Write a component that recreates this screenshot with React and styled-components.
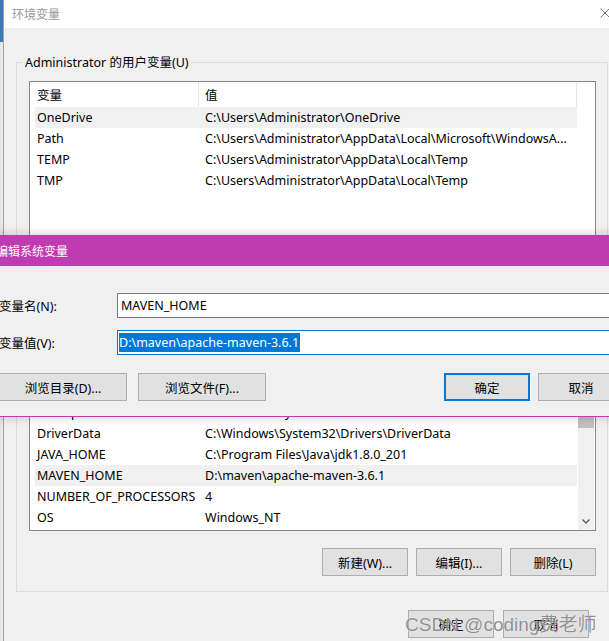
import styled, { createGlobalStyle } from "styled-components"

const GlobalStyle = createGlobalStyle`
    html, body {
        margin: 0;
        padding: 0;
        background: #f0f0f0;
    }
    body {
        font-family: "Noto Sans", "Noto Sans CJK SC", sans-serif;
        color: #000;
    }
`

const uiFont = `"Noto Sans", "Noto Sans CJK SC", sans-serif`

const Screen = styled.div`
    position: relative;
    width: 609px;
    height: 641px;
    overflow: hidden;
    display: flex;
    background: #f0f0f0;
`

// sliver of another window peeking out on the left
const BehindEdge = styled.div`
    flex: none;
    width: 3px;
    background: linear-gradient(to bottom, #3d78bd 0 42px, #e6e6e6 42px);
`

const Window = styled.div`
    flex: 1;
    min-width: 0;
    display: flex;
    flex-direction: column;
    border-left: 1px solid #a3a3a3;
`

const TitleBar = styled.div`
    flex: none;
    height: 28px;
    display: flex;
    align-items: center;
    justify-content: space-between;
    padding-left: 8px;
    background: #fff;
    color: #999;
    font-size: 12px;
`

const CloseIcon = styled.svg`
    margin-right: -1px;
    margin-top: -2px;
`

const WindowBody = styled.div`
    flex: 1;
    display: flex;
    flex-direction: column;
    padding: 26px 1px 0 12px;
`

const GroupBox = styled.fieldset`
    margin: 0;
    min-width: 0;
    padding: 10px 11px 15px 12px;
    border: 1px solid #dcdcdc;
    display: flex;
    flex-direction: column;
    gap: 17px;
`

const Legend = styled.legend`
    margin-left: -6px;
    padding: 0 2px;
    font-size: 12.5px;
    line-height: 17px;
`

const ListBox = styled.div`
    box-sizing: border-box;
    height: 450px;
    border: 1px solid #828790;
    background: #fff;
    padding-left: 5px;
    display: flex;
    flex-direction: column;
    font-size: 12.5px;
`

const Pane = styled.div`
    display: grid;
    grid-template-columns: 1fr 18px;
    height: ${p => p.$height || "auto"};
`

const Filler = styled.div`
    flex: 1;
`

const Rows = styled.div`
    display: flex;
    flex-direction: column;
    min-width: 0;
`

const Row = styled.div`
    display: grid;
    grid-template-columns: 164px 1fr;
    align-items: center;
    height: ${p => p.$header ? "25px" : "21px"};
    background: ${p => p.$selected ? "#f0f0f0" : "transparent"};
    white-space: nowrap;
`

const Cell = styled.div`
    box-sizing: border-box;
    height: 100%;
    display: flex;
    align-items: center;
    overflow: hidden;
    padding-left: ${p => p.$value ? "6px" : "2px"};
    border-right: ${p => p.$header ? "1px solid #e5e5e5" : "none"};
`

const ScrollTrack = styled.div`
    margin-left: 1px;
    width: 16px;
    background: #f0f0f0;
    display: flex;
    flex-direction: column;
    justify-content: space-between;
    align-items: stretch;
`

const Thumb = styled.div`
    height: 26px;
    background: #c1c1c1;
`

const ArrowBox = styled.div`
    height: 17px;
    display: flex;
    align-items: center;
    justify-content: center;
`

const ButtonRow = styled.div`
    display: flex;
    justify-content: ${p => p.$align || "flex-end"};
    gap: ${p => p.$gap || "8px"};
    padding-right: ${p => p.$padRight || "0"};
    margin-top: ${p => p.$top || "0"};
`

const Button = styled.button`
    box-sizing: border-box;
    width: ${p => p.$wide ? "128px" : "86px"};
    height: 28px;
    padding: 0;
    background: #e1e1e1;
    border: ${p => p.$default ? "2px solid #0078d7" : "1px solid #adadad"};
    font-family: ${uiFont};
    font-size: 12.5px;
    color: #000;
`

const Dialog = styled.div`
    position: absolute;
    top: 235px;
    left: -12px;
    width: 647px;
    box-sizing: border-box;
    background: #f0f0f0;
    border: 1px solid #c13bb0;
    border-top: none;
    box-shadow: 0 0 11px rgba(0, 0, 0, 0.2);
`

const DialogTitle = styled.div`
    height: 31px;
    display: flex;
    align-items: center;
    padding-left: 7px;
    background: #c13bb0;
    color: #fff;
    font-size: 12px;
`

const DialogBody = styled.div`
    padding: 27px 10px 15px 10px;
`

const Form = styled.div`
    display: grid;
    grid-template-columns: 118px 1fr;
    row-gap: 12px;
    align-items: center;
    font-size: 12.5px;
`

const TextField = styled.div`
    box-sizing: border-box;
    height: 25px;
    display: flex;
    align-items: center;
    background: #fff;
    border: 1px solid ${p => p.$focused ? "#0078d7" : "#7a7a7a"};
    padding-left: ${p => p.$focused ? "1px" : "3px"};
    white-space: nowrap;
`

const Selection = styled.span`
    background: #0078d7;
    color: #fff;
    line-height: 19px;
    padding-right: 1px;
`

const ButtonGroup = styled.div`
    display: flex;
    gap: ${p => p.$gap || "8px"};
`

const Watermark = styled.div`
    position: absolute;
    z-index: 2;
    left: 405px;
    top: 609px;
    font-family: "Liberation Sans", "Noto Sans CJK SC", sans-serif;
    font-size: 19px;
    color: rgba(125, 125, 125, 0.85);
    text-shadow: 0 0 1px rgba(255, 255, 255, 0.9);
    white-space: nowrap;
    pointer-events: none;
`

const userVars = [
    ["OneDrive", "C:\\Users\\Administrator\\OneDrive", true],
    ["Path", "C:\\Users\\Administrator\\AppData\\Local\\Microsoft\\WindowsA..."],
    ["TEMP", "C:\\Users\\Administrator\\AppData\\Local\\Temp"],
    ["TMP", "C:\\Users\\Administrator\\AppData\\Local\\Temp"],
]

const systemVars = [
    ["ComSpec", "C:\\Windows\\system32\\cmd.exe"],
    ["DriverData", "C:\\Windows\\System32\\Drivers\\DriverData"],
    ["JAVA_HOME", "C:\\Program Files\\Java\\jdk1.8.0_201"],
    ["MAVEN_HOME", "D:\\maven\\apache-maven-3.6.1", true],
    ["NUMBER_OF_PROCESSORS", "4"],
    ["OS", "Windows_NT"],
]

const VarRow = ({ name, value, selected }) => (
    <Row $selected={selected}>
        <Cell>{name}</Cell>
        <Cell $value>{value}</Cell>
    </Row>
)

const App = () => {
    return (
        <Screen>
            <GlobalStyle />
            <BehindEdge />
            <Window>
                <TitleBar>
                    <span>环境变量</span>
                    <CloseIcon width="10" height="10" viewBox="0 0 10 10">
                        <path d="M0.5 0.5 L9.5 9.5 M9.5 0.5 L0.5 9.5" stroke="#777" strokeWidth="1" fill="none" />
                    </CloseIcon>
                </TitleBar>
                <WindowBody>
                    <GroupBox>
                        <Legend>Administrator 的用户变量(U)</Legend>
                        <ListBox>
                            <Pane>
                                <Rows>
                                    <Row $header>
                                        <Cell $header>变量</Cell>
                                        <Cell $header $value>值</Cell>
                                    </Row>
                                    {userVars.map(([n, v, s]) => (
                                        <VarRow key={n} name={n} value={v} selected={s} />
                                    ))}
                                </Rows>
                                <div />
                            </Pane>
                            <Filler />
                            <Pane $height="128px">
                                <Rows>
                                    {systemVars.map(([n, v, s]) => (
                                        <VarRow key={n} name={n} value={v} selected={s} />
                                    ))}
                                </Rows>
                                <ScrollTrack>
                                    <Thumb />
                                    <ArrowBox>
                                        <svg width="8" height="5" viewBox="0 0 8 5">
                                            <path d="M0.5 0.5 L4 4 L7.5 0.5" stroke="#606060" strokeWidth="1.4" fill="none" />
                                        </svg>
                                    </ArrowBox>
                                </ScrollTrack>
                            </Pane>
                        </ListBox>
                        <ButtonRow>
                            <Button>新建(W)...</Button>
                            <Button>编辑(I)...</Button>
                            <Button>删除(L)</Button>
                        </ButtonRow>
                    </GroupBox>
                    <ButtonRow $top="18px" $gap="9px" $padRight="19px">
                        <Button>确定</Button>
                        <Button>取消</Button>
                    </ButtonRow>
                </WindowBody>
            </Window>

            <Dialog>
                <DialogTitle>编辑系统变量</DialogTitle>
                <DialogBody>
                    <Form>
                        <span>变量名(N):</span>
                        <TextField>MAVEN_HOME</TextField>
                        <span>变量值(V):</span>
                        <TextField $focused>
                            <Selection>D:\maven\apache-maven-3.6.1</Selection>
                        </TextField>
                    </Form>
                    <ButtonRow $align="space-between" $top="18px">
                        <ButtonGroup $gap="11px">
                            <Button $wide>浏览目录(D)...</Button>
                            <Button $wide>浏览文件(F)...</Button>
                        </ButtonGroup>
                        <ButtonGroup>
                            <Button $default>确定</Button>
                            <Button>取消</Button>
                        </ButtonGroup>
                    </ButtonRow>
                </DialogBody>
            </Dialog>

            <Watermark>CSDN @coding费老师</Watermark>
        </Screen>
    )
}

export default App;
